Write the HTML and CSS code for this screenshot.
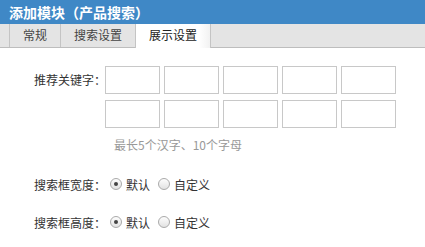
FILE: index.html
```html
<!DOCTYPE html>
<html lang="zh-CN">
<head>
    <meta charset="UTF-8">
    <title>添加模块（产品搜索）</title>
    <link rel="stylesheet" href="styles.css">
</head>
<body>
    <div class="dialog">
        <div class="dialog-title">添加模块（产品搜索）</div>

        <div class="tabs">
            <div class="tab">常规</div>
            <div class="tab">搜索设置</div>
            <div class="tab active">展示设置</div>
        </div>

        <div class="panel">
            <div class="row keyword-row">
                <label class="row-label">推荐关键字：</label>
                <div class="keyword-grid">
                    <input type="text">
                    <input type="text">
                    <input type="text">
                    <input type="text">
                    <input type="text">
                    <input type="text">
                    <input type="text">
                    <input type="text">
                    <input type="text">
                    <input type="text">
                </div>
            </div>
            <div class="hint">最长5个汉字、10个字母</div>

            <div class="row radio-row">
                <label class="row-label">搜索框宽度：</label>
                <label class="radio"><input type="radio" name="width" checked> 默认</label>
                <label class="radio"><input type="radio" name="width"> 自定义</label>
            </div>

            <div class="row radio-row">
                <label class="row-label">搜索框高度：</label>
                <label class="radio"><input type="radio" name="height" checked> 默认</label>
                <label class="radio"><input type="radio" name="height"> 自定义</label>
            </div>
        </div>
    </div>
</body>
</html>
```

FILE: styles.css
```css
:root {
    --title-blue: #3f88c6;
    --tab-bg: #e4e4e4;
    --line: #c4c4c4;
    --text: #333;
    --hint: #999;
}

* {
    margin: 0;
    padding: 0;
    box-sizing: border-box;
}

body {
    background: #fff;
    font-family: "Noto Sans CJK SC", "Noto Sans", sans-serif;
    font-size: 12px;
    color: var(--text);
}

.dialog-title {
    height: 24px;
    line-height: 24px;
    padding-left: 9px;
    background: var(--title-blue);
    color: #fff;
    font-size: 14px;
    font-weight: bold;
}

.tabs {
    display: flex;
    height: 24px;
    padding-left: 9px;
    background: var(--tab-bg);
    border-bottom: 1px solid #bdbdbd;
}

.tab {
    height: 23px;
    line-height: 22px;
    padding: 0 13px;
    border-left: 1px solid var(--line);
    font-size: 12px;
    color: #444;
}

.tab.active {
    height: 24px;
    background: linear-gradient(to right, #fff 85%, #f2f2f2);
    border-right: 1px solid var(--line);
    color: #222;
}

.panel {
    padding: 18px 0 0 34px;
}

.row {
    display: flex;
    align-items: center;
}

.row-label {
    width: 71px;
    flex-shrink: 0;
    white-space: nowrap;
}

.keyword-row {
    align-items: flex-start;
}

.keyword-row .row-label {
    line-height: 28px;
}

.keyword-grid {
    display: grid;
    grid-template-columns: repeat(5, 55px);
    gap: 6px 4px;
}

.keyword-grid input {
    width: 55px;
    height: 28px;
    border: 1px solid #c8c8c8;
    background: #fff;
    outline: none;
}

.hint {
    margin: 10px 0 0 80px;
    line-height: 14px;
    color: var(--hint);
}

.radio-row {
    height: 20px;
    margin-top: 22px;
}

.radio-row + .radio-row {
    margin-top: 18px;
}

.radio {
    display: flex;
    align-items: center;
    gap: 4px;
    margin-left: 5px;
    margin-right: 3px;
}

.radio input {
    appearance: none;
    -webkit-appearance: none;
    width: 12px;
    height: 12px;
    border: 1px solid #aaa;
    border-radius: 50%;
    background: linear-gradient(#fdfdfd, #e2e2e2);
    display: grid;
    place-items: center;
}

.radio input:checked::after {
    content: '';
    width: 4px;
    height: 4px;
    border-radius: 50%;
    background: #444;
}
```
